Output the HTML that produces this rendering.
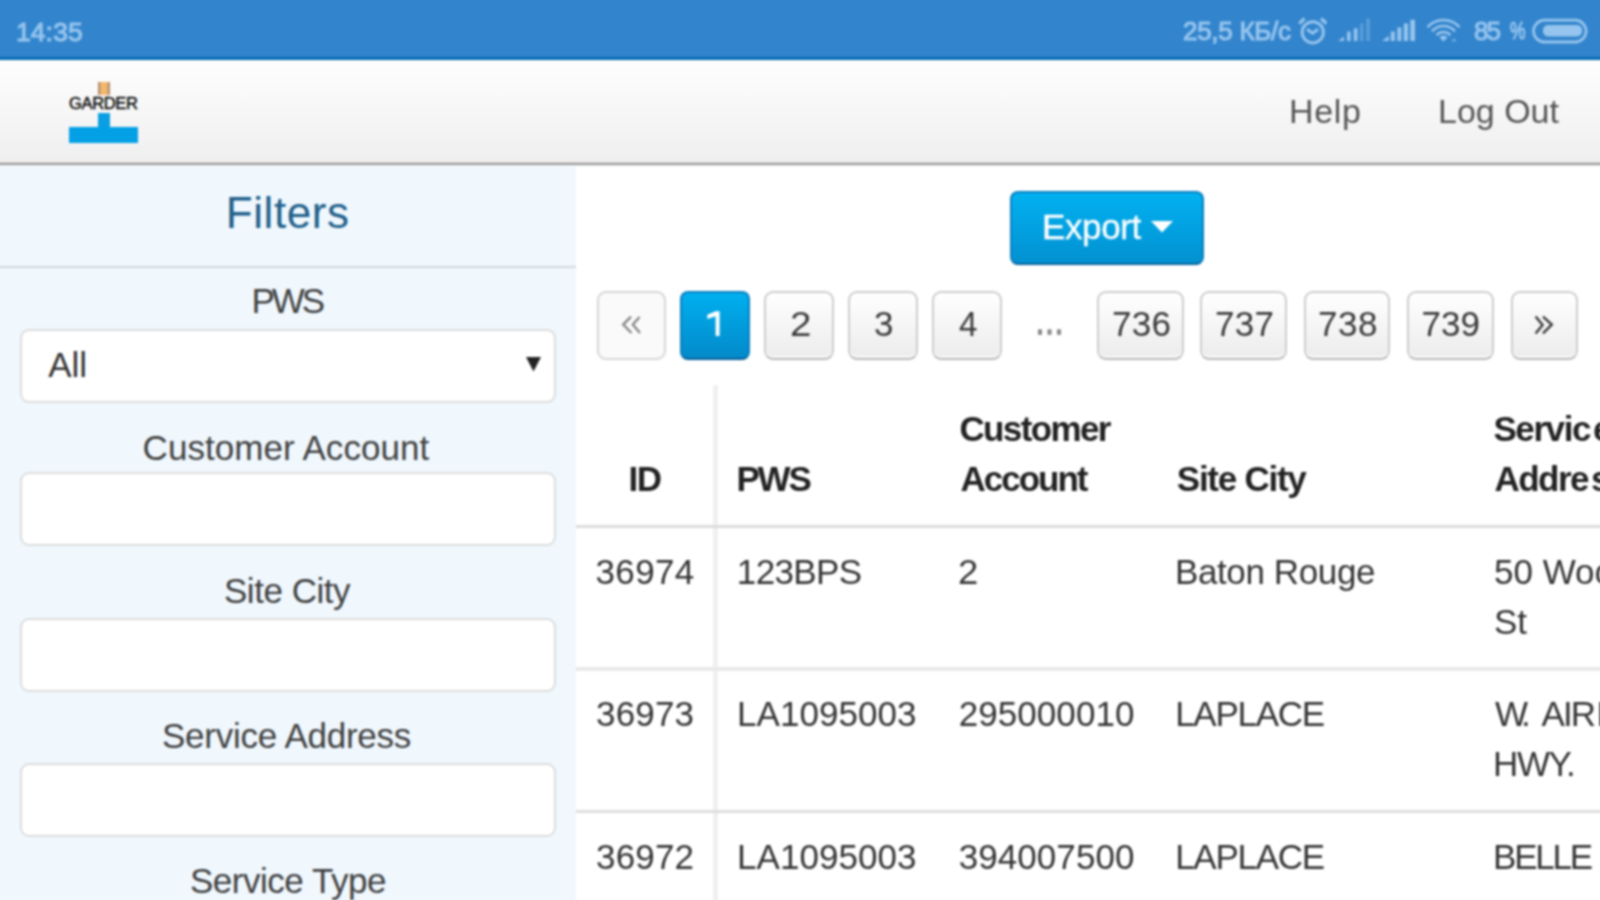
<!DOCTYPE html>
<html><head><meta charset="utf-8"><style>
html,body{margin:0;padding:0;width:1600px;height:900px;overflow:hidden;background:#fff;}
body{position:relative;font-family:"Liberation Sans",sans-serif;}
.t{position:absolute;white-space:nowrap;}
#w{position:absolute;left:0;top:0;width:1600px;height:900px;filter:blur(1px);}
</style></head><body>
<div id="w"><div style="position:absolute;left:-12px;top:-12px;width:1624px;height:69px;box-sizing:border-box;background:#3284cc;"></div>
<div style="position:absolute;left:-12px;top:57px;width:1624px;height:3px;box-sizing:border-box;background:#036ab4;"></div>
<svg style="position:absolute;left:0;top:0" width="1600" height="60" viewBox="0 0 1600 60">
<g fill="none" stroke="#95c4ee" stroke-width="3">
 <circle cx="1312.8" cy="32.3" r="10.6"/>
 <path d="M1299.3 23.5 l5.2 -5 M1326.3 23.5 l-5.2 -5" stroke-width="3.2"/>
 <path d="M1307 29.2 l5.6 4 l5.6 -4"/>
</g>
<g fill="#95c4ee">
 <path d="M1338 41 l6 -4.6 v4.6 z"/>
 <rect x="1347" y="31.5" width="3.6" height="9.5"/>
 <rect x="1353.8" y="28.3" width="3.7" height="12.7"/>
 <rect x="1360" y="23.4" width="3.4" height="17.6" opacity="0.4"/>
 <rect x="1366.3" y="18.5" width="3.6" height="22.5" opacity="0.4"/>
 <path d="M1382 41 l6.8 -5.2 v5.2 z"/>
 <rect x="1390.8" y="31.5" width="4.1" height="9.5"/>
 <rect x="1397.3" y="27.4" width="4.1" height="13.6"/>
 <rect x="1403.8" y="23.4" width="4.2" height="17.6"/>
 <rect x="1410.3" y="19.7" width="4.7" height="21.3"/>
</g>
<g fill="none" stroke="#95c4ee" stroke-width="2.6">
 <path d="M1427.5 27.2 A21.5 21.5 0 0 1 1459.5 27.2"/>
 <path d="M1432.0 31.4 A15 15 0 0 1 1455.0 31.4"/>
 <path d="M1436.6 35.2 A9 9 0 0 1 1450.4 35.2"/>
</g>
<path d="M1443.5 41.5 L1439.5 37.2 A5.5 5.5 0 0 1 1447.5 37.2 Z" fill="#95c4ee"/>
<rect x="1452.5" y="38.5" width="3" height="3.5" fill="#95c4ee" opacity="0.55"/>
<rect x="1533.5" y="20.2" width="52.6" height="21.8" rx="10.9" fill="none" stroke="#95c4ee" stroke-width="2.8"/>
<rect x="1543" y="25" width="39" height="11.5" rx="5" fill="#95c4ee"/>
</svg>
<div style="position:absolute;left:-12px;top:60px;width:1624px;height:103px;box-sizing:border-box;background:linear-gradient(#fefefe,#efefef);"></div>
<div style="position:absolute;left:-12px;top:162px;width:1624px;height:1px;box-sizing:border-box;background:#dcdcdc;"></div>
<div style="position:absolute;left:-12px;top:163px;width:1624px;height:2px;box-sizing:border-box;background:#969698;"></div>
<div style="position:absolute;left:-12px;top:165px;width:1624px;height:1px;box-sizing:border-box;background:#d8d9da;"></div>
<div style="position:absolute;left:-12px;top:165px;width:1624px;height:2px;box-sizing:border-box;background:#f6f8f9;"></div>
<div style="position:absolute;left:98px;top:82px;width:12px;height:13px;box-sizing:border-box;background:linear-gradient(90deg,#a08070,#f0b870 30%,#f2b86c 70%,#a08070);"></div>
<div style="position:absolute;left:98px;top:113px;width:12px;height:15px;box-sizing:border-box;background:#0a9fe3;"></div>
<div style="position:absolute;left:69px;top:127px;width:69px;height:16px;box-sizing:border-box;background:#04a0e6;"></div>
<div style="position:absolute;left:-12px;top:166px;width:588px;height:746px;box-sizing:border-box;background:#f0f8fe;"></div>
<div style="position:absolute;left:-12px;top:266px;width:588px;height:2px;box-sizing:border-box;background:#d3d9de;"></div>
<div style="position:absolute;left:20px;top:329px;width:536px;height:74px;box-sizing:border-box;background:#fff;border:2px solid #dcdcdc;border-radius:9px;"></div>
<svg style="position:absolute;left:524px;top:355px" width="20" height="20"><path d="M2 2 H17 L9.5 16.5 Z" fill="#222"/></svg>
<div style="position:absolute;left:20px;top:472px;width:536px;height:74px;box-sizing:border-box;background:#fff;border:2px solid #dcdcdc;border-radius:9px;"></div>
<div style="position:absolute;left:20px;top:618px;width:536px;height:74px;box-sizing:border-box;background:#fff;border:2px solid #dcdcdc;border-radius:9px;"></div>
<div style="position:absolute;left:20px;top:763px;width:536px;height:74px;box-sizing:border-box;background:#fff;border:2px solid #dcdcdc;border-radius:9px;"></div>
<div style="position:absolute;left:1010px;top:191px;width:194px;height:74px;box-sizing:border-box;background:linear-gradient(#02b1f1,#0391d1);border:2px solid #0a7fbf;border-bottom-color:#06649f;border-radius:8px;"></div>
<svg style="position:absolute;left:1150px;top:220px" width="24" height="14"><path d="M1 1 H23 L12 12.5 Z" fill="#fff"/></svg>
<div style="position:absolute;left:597px;top:291px;width:69px;height:69px;box-sizing:border-box;background:#fafafa;border:2px solid #d6d6d6;border-radius:9px;"></div>
<svg style="position:absolute;left:0;top:0;overflow:visible" width="1" height="1"><path d="M631 316.6 L623.2 324.6 L631.5 333 M639.6 317 L632.8 324.6 L640 333" fill="none" stroke="#858585" stroke-width="2.3"/></svg>
<div style="position:absolute;left:680px;top:291px;width:70px;height:69px;box-sizing:border-box;background:linear-gradient(#00afef,#038aca);border:2px solid #0a7fbf;border-bottom-color:#05609a;border-radius:8px;"></div>
<svg style="position:absolute;left:0;top:0;overflow:visible" width="1" height="1"><path d="M707.3 314.8 L715.6 311.2 L719.6 311.2 L719.6 336 L715.6 336 L715.6 316.2 L707.3 319 Z" fill="#fff"/></svg>
<div style="position:absolute;left:764px;top:291px;width:70px;height:69px;box-sizing:border-box;background:linear-gradient(#ffffff,#ececec);border:2px solid #cdcdcd;border-bottom-color:#b8b8b8;border-radius:9px;box-shadow:inset 0 -2px 0 rgba(255,255,255,0.7);"></div>
<div style="position:absolute;left:848px;top:291px;width:70px;height:69px;box-sizing:border-box;background:linear-gradient(#ffffff,#ececec);border:2px solid #cdcdcd;border-bottom-color:#b8b8b8;border-radius:9px;box-shadow:inset 0 -2px 0 rgba(255,255,255,0.7);"></div>
<div style="position:absolute;left:932px;top:291px;width:70px;height:69px;box-sizing:border-box;background:linear-gradient(#ffffff,#ececec);border:2px solid #cdcdcd;border-bottom-color:#b8b8b8;border-radius:9px;box-shadow:inset 0 -2px 0 rgba(255,255,255,0.7);"></div>
<div style="position:absolute;left:1097px;top:291px;width:87px;height:69px;box-sizing:border-box;background:linear-gradient(#ffffff,#ececec);border:2px solid #cdcdcd;border-bottom-color:#b8b8b8;border-radius:9px;box-shadow:inset 0 -2px 0 rgba(255,255,255,0.7);"></div>
<div style="position:absolute;left:1200px;top:291px;width:87px;height:69px;box-sizing:border-box;background:linear-gradient(#ffffff,#ececec);border:2px solid #cdcdcd;border-bottom-color:#b8b8b8;border-radius:9px;box-shadow:inset 0 -2px 0 rgba(255,255,255,0.7);"></div>
<div style="position:absolute;left:1304px;top:291px;width:86px;height:69px;box-sizing:border-box;background:linear-gradient(#ffffff,#ececec);border:2px solid #cdcdcd;border-bottom-color:#b8b8b8;border-radius:9px;box-shadow:inset 0 -2px 0 rgba(255,255,255,0.7);"></div>
<div style="position:absolute;left:1407px;top:291px;width:87px;height:69px;box-sizing:border-box;background:linear-gradient(#ffffff,#ececec);border:2px solid #cdcdcd;border-bottom-color:#b8b8b8;border-radius:9px;box-shadow:inset 0 -2px 0 rgba(255,255,255,0.7);"></div>
<div style="position:absolute;left:1511px;top:291px;width:67px;height:69px;box-sizing:border-box;background:linear-gradient(#ffffff,#ececec);border:2px solid #cdcdcd;border-bottom-color:#b8b8b8;border-radius:9px;box-shadow:inset 0 -2px 0 rgba(255,255,255,0.7);"></div>
<svg style="position:absolute;left:0;top:0;overflow:visible" width="1" height="1"><path d="M1535.6 316.6 L1542.6 325 L1535.6 333.4 M1543 316.6 L1551.8 324.5 L1543 333.4" fill="none" stroke="#3a3a3a" stroke-width="2.4"/></svg>
<svg style="position:absolute;left:0;top:0;overflow:visible" width="1" height="1"><g fill="#878787"><rect x="1038" y="329.3" width="4" height="5.5"/><rect x="1047.5" y="329.3" width="4" height="5.5"/><rect x="1057" y="329.3" width="4" height="5.5"/></g></svg>
<div style="position:absolute;left:713px;top:385px;width:5px;height:527px;box-sizing:border-box;background:#f0f0f0;"></div>
<div style="position:absolute;left:576px;top:525px;width:1036px;height:3px;box-sizing:border-box;background:#dcdcdc;"></div>
<div style="position:absolute;left:576px;top:667px;width:1036px;height:4px;box-sizing:border-box;background:#e9e9e9;"></div>
<div style="position:absolute;left:576px;top:810px;width:1036px;height:3px;box-sizing:border-box;background:#dedede;"></div>
<div class="t" style="left:16.00px;top:18.59px;font-size:26px;line-height:26px;font-weight:400;color:#95c4ee;letter-spacing:0.35px;-webkit-text-stroke:1.1px #95c4ee;">14:35</div>
<div class="t" style="left:1183.00px;top:17.59px;font-size:26px;line-height:26px;font-weight:400;color:#95c4ee;letter-spacing:-0.28px;-webkit-text-stroke:1.1px #95c4ee;">25,5 КБ/с</div>
<div class="t" style="left:1474.00px;top:17.59px;font-size:26px;line-height:26px;font-weight:400;color:#95c4ee;letter-spacing:-2.06px;-webkit-text-stroke:1.1px #95c4ee;">85</div>
<div class="t" style="left:1510.00px;top:19.28px;font-size:24px;line-height:24px;font-weight:400;color:#95c4ee;transform:scaleX(0.724);transform-origin:0px 0;-webkit-text-stroke:1.1px #95c4ee;">%</div>
<div class="t" style="left:69.00px;top:95.23px;font-size:16.5px;line-height:16.5px;font-weight:400;color:#111;letter-spacing:-0.34px;-webkit-text-stroke:0.5px #111;">GARDER</div>
<div class="t" style="left:1289.00px;top:94.22px;font-size:34px;line-height:34px;font-weight:400;color:#555;letter-spacing:0.66px;">Help</div>
<div class="t" style="left:1438.00px;top:94.22px;font-size:34px;line-height:34px;font-weight:400;color:#555;">Log Out</div>
<div class="t" style="left:225.75px;top:190.75px;font-size:44px;line-height:44px;font-weight:400;color:#215f8a;letter-spacing:0.58px;">Filters</div>
<div class="t" style="left:251.40px;top:282.97px;font-size:35px;line-height:35px;font-weight:400;color:#404040;letter-spacing:-3.04px;">PWS</div>
<div class="t" style="left:48.30px;top:347.07px;font-size:35px;line-height:35px;font-weight:400;color:#333;letter-spacing:-0.06px;">All</div>
<div class="t" style="left:142.60px;top:429.67px;font-size:35px;line-height:35px;font-weight:400;color:#404040;letter-spacing:0.04px;">Customer Account</div>
<div class="t" style="left:224.00px;top:573.37px;font-size:35px;line-height:35px;font-weight:400;color:#404040;letter-spacing:-0.48px;">Site City</div>
<div class="t" style="left:162.00px;top:718.07px;font-size:35px;line-height:35px;font-weight:400;color:#404040;letter-spacing:-0.26px;">Service Address</div>
<div class="t" style="left:190.00px;top:863.17px;font-size:35px;line-height:35px;font-weight:400;color:#404040;letter-spacing:-0.48px;">Service Type</div>
<div class="t" style="left:1042.00px;top:208.77px;font-size:35px;line-height:35px;font-weight:400;color:#fff;letter-spacing:-0.39px;-webkit-text-stroke:0.3px #fff;">Export</div>
<div class="t" style="left:789.90px;top:306.37px;font-size:35px;line-height:35px;font-weight:400;color:#3a3a3a;transform:scaleX(1.100);transform-origin:1px 0;">2</div>
<div class="t" style="left:873.90px;top:306.37px;font-size:35px;line-height:35px;font-weight:400;color:#3a3a3a;">3</div>
<div class="t" style="left:959.00px;top:306.37px;font-size:35px;line-height:35px;font-weight:400;color:#3a3a3a;transform:scaleX(0.947);transform-origin:0px 0;">4</div>
<div class="t" style="left:1112.00px;top:306.37px;font-size:35px;line-height:35px;font-weight:400;color:#3a3a3a;letter-spacing:0.23px;">736</div>
<div class="t" style="left:1215.00px;top:306.37px;font-size:35px;line-height:35px;font-weight:400;color:#3a3a3a;letter-spacing:0.28px;">737</div>
<div class="t" style="left:1318.00px;top:306.37px;font-size:35px;line-height:35px;font-weight:400;color:#3a3a3a;letter-spacing:0.53px;">738</div>
<div class="t" style="left:1421.60px;top:306.37px;font-size:35px;line-height:35px;font-weight:400;color:#3a3a3a;letter-spacing:0.03px;">739</div>
<div class="t" style="left:628.50px;top:460.87px;font-size:35px;line-height:35px;font-weight:700;color:#222;letter-spacing:-1.52px;">ID</div>
<div class="t" style="left:736.40px;top:460.87px;font-size:35px;line-height:35px;font-weight:700;color:#222;letter-spacing:-2.14px;">PWS</div>
<div class="t" style="left:959.40px;top:410.87px;font-size:35px;line-height:35px;font-weight:700;color:#222;letter-spacing:-1.61px;">Customer</div>
<div class="t" style="left:960.40px;top:460.87px;font-size:35px;line-height:35px;font-weight:700;color:#222;letter-spacing:-1.99px;">Account</div>
<div class="t" style="left:1176.80px;top:460.87px;font-size:35px;line-height:35px;font-weight:700;color:#222;letter-spacing:-1.26px;">Site City</div>
<div class="t" style="left:1493.40px;top:410.87px;font-size:35px;line-height:35px;font-weight:700;color:#222;letter-spacing:-1.40px;">Servic</div>
<div class="t" style="left:1593.00px;top:410.87px;font-size:35px;line-height:35px;font-weight:700;color:#222;">e</div>
<div class="t" style="left:1494.40px;top:460.87px;font-size:35px;line-height:35px;font-weight:700;color:#222;letter-spacing:-1.51px;">Addre</div>
<div class="t" style="left:1591.00px;top:460.87px;font-size:35px;line-height:35px;font-weight:700;color:#222;">ss</div>
<div class="t" style="left:595.50px;top:554.07px;font-size:35px;line-height:35px;font-weight:400;color:#353535;letter-spacing:0.36px;">36974</div>
<div class="t" style="left:736.80px;top:554.07px;font-size:35px;line-height:35px;font-weight:400;color:#353535;letter-spacing:-0.62px;">123BPS</div>
<div class="t" style="left:958.30px;top:554.07px;font-size:35px;line-height:35px;font-weight:400;color:#353535;transform:scaleX(1.041);transform-origin:1px 0;">2</div>
<div class="t" style="left:1175.00px;top:554.07px;font-size:35px;line-height:35px;font-weight:400;color:#353535;letter-spacing:-0.39px;">Baton Rouge</div>
<div class="t" style="left:1494.00px;top:554.07px;font-size:35px;line-height:35px;font-weight:400;color:#353535;">50 Woodland</div>
<div class="t" style="left:1494.00px;top:604.07px;font-size:35px;line-height:35px;font-weight:400;color:#353535;">St</div>
<div class="t" style="left:596.00px;top:695.57px;font-size:35px;line-height:35px;font-weight:400;color:#353535;letter-spacing:0.16px;">36973</div>
<div class="t" style="left:737.00px;top:695.57px;font-size:35px;line-height:35px;font-weight:400;color:#353535;letter-spacing:0.05px;">LA1095003</div>
<div class="t" style="left:958.80px;top:695.57px;font-size:35px;line-height:35px;font-weight:400;color:#353535;letter-spacing:0.05px;">295000010</div>
<div class="t" style="left:1175.20px;top:695.57px;font-size:35px;line-height:35px;font-weight:400;color:#353535;letter-spacing:-1.29px;">LAPLACE</div>
<div class="t" style="left:1495.00px;top:695.57px;font-size:35px;line-height:35px;font-weight:400;color:#353535;letter-spacing:-5.10px;">W.</div>
<div class="t" style="left:1541.50px;top:695.57px;font-size:35px;line-height:35px;font-weight:400;color:#353535;letter-spacing:-1.93px;">AIR</div>
<div class="t" style="left:1596.50px;top:695.57px;font-size:35px;line-height:35px;font-weight:400;color:#353535;">LINE</div>
<div class="t" style="left:1493.00px;top:745.57px;font-size:35px;line-height:35px;font-weight:400;color:#353535;letter-spacing:-1.38px;">HWY.</div>
<div class="t" style="left:596.00px;top:838.67px;font-size:35px;line-height:35px;font-weight:400;color:#353535;letter-spacing:0.16px;">36972</div>
<div class="t" style="left:737.00px;top:838.67px;font-size:35px;line-height:35px;font-weight:400;color:#353535;letter-spacing:0.05px;">LA1095003</div>
<div class="t" style="left:958.80px;top:838.67px;font-size:35px;line-height:35px;font-weight:400;color:#353535;letter-spacing:0.05px;">394007500</div>
<div class="t" style="left:1175.20px;top:838.67px;font-size:35px;line-height:35px;font-weight:400;color:#353535;letter-spacing:-1.29px;">LAPLACE</div>
<div class="t" style="left:1493.00px;top:838.67px;font-size:35px;line-height:35px;font-weight:400;color:#353535;letter-spacing:-2.21px;">BELLE</div>
</div></body></html>
